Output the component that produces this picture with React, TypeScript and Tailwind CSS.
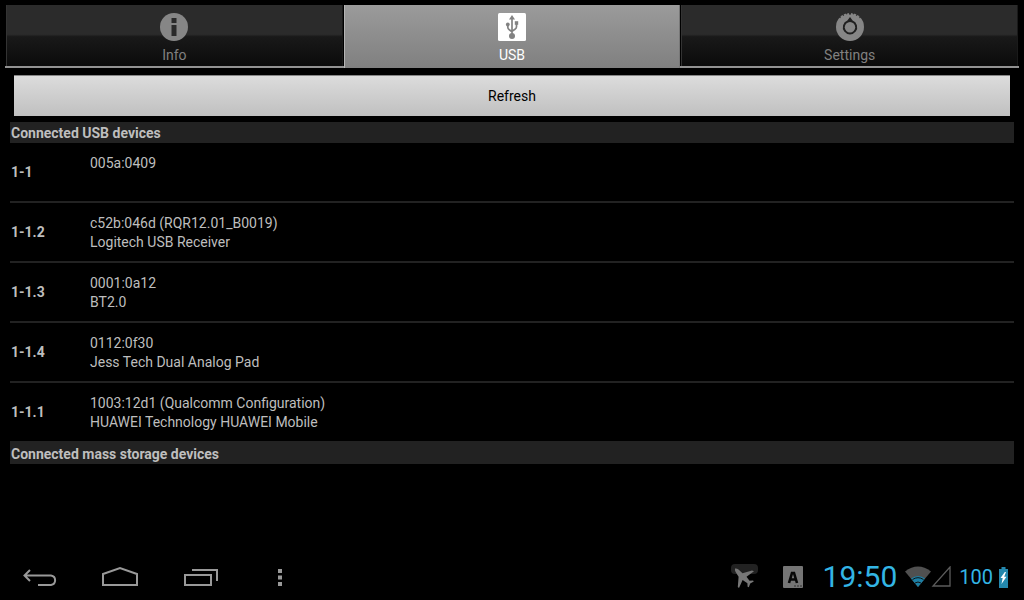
import { useState } from "react";
import type { ReactNode } from "react";

type Device = {
  port: string;
  id: string;
  name?: string;
};

const usbDevices: Device[] = [
  { port: "1-1", id: "005a:0409" },
  { port: "1-1.2", id: "c52b:046d (RQR12.01_B0019)", name: "Logitech USB Receiver" },
  { port: "1-1.3", id: "0001:0a12", name: "BT2.0" },
  { port: "1-1.4", id: "0112:0f30", name: "Jess Tech Dual Analog Pad" },
  { port: "1-1.1", id: "1003:12d1 (Qualcomm Configuration)", name: "HUAWEI Technology HUAWEI Mobile" },
];

function InfoIcon() {
  return (
    <svg width="28" height="28" viewBox="0 0 28 28" aria-hidden="true">
      <circle cx="14" cy="14" r="14" fill="#868686" />
      <path d="M11.5 5h5v5h-5zM11.5 12h5v11h-5z" fill="#2a2a2a" />
    </svg>
  );
}

function UsbIcon() {
  return (
    <svg width="28" height="28" viewBox="0 0 28 28" aria-hidden="true">
      <rect width="28" height="28" rx="1.5" fill="#fff" />
      <g fill="#828282">
        <path d="M14 2l3 4.500h-6z" />
        <circle cx="14" cy="23" r="3" />
        <circle cx="9.800" cy="11.500" r="1.900" />
        <path d="M16.800 8.200h3.400v3.600h-3.400z" />
      </g>
      <path
        d="M14 5v17M9.800 12v2.200q0 1.600 1.500 2.500l2.700 2M18.500 11v2.800q0 1.600-1.500 2.500l-3 2"
        fill="none"
        stroke="#828282"
        strokeWidth="1.700"
      />
    </svg>
  );
}

function SettingsIcon() {
  return (
    <svg width="28" height="28" viewBox="0 0 28 28" aria-hidden="true">
      <circle cx="14" cy="14" r="14" fill="#868686" />
      <path
        d="M3.500 4l1 .9M7 1.500l.7 1.100M10.500 0l.4 1.300M17.500 0l-.4 1.300M21 1.500l-.7 1.100M24.500 4l-1 .9"
        stroke="#2a2a2a"
        strokeWidth="1.200"
      />
      <path d="M12.800 0h2.400l-.6 1.800h-1.200z" fill="#2a2a2a" />
      <path d="M14 4l2.600 3.500a7.200 7.200 0 1 1-5.200 0z" fill="#202020" />
      <circle cx="14" cy="14.200" r="5.200" fill="#868686" />
    </svg>
  );
}

const tabs: { label: string; icon: ReactNode }[] = [
  { label: "Info", icon: <InfoIcon /> },
  { label: "USB", icon: <UsbIcon /> },
  { label: "Settings", icon: <SettingsIcon /> },
];

function TabBar({ active, onSelect }: { active: string; onSelect: (label: string) => void }) {
  return (
    <div role="tablist" className="mx-[5px] mt-[5px] flex gap-px border-b-2 border-[#929292] px-px">
      {tabs.map(({ label, icon }) => {
        const selected = label === active;
        return (
          <button
            key={label}
            type="button"
            role="tab"
            aria-selected={selected}
            onClick={() => onSelect(label)}
            className={
              selected
                ? "-mb-[2px] flex h-[63px] flex-1 flex-col items-center border-x border-l-[#b5b5b5] border-r-[#777] bg-linear-to-b from-[#9b9b9b] via-[#8d8d8d] to-[#808080] pt-2 text-white"
                : "flex h-[61px] flex-1 flex-col items-center border-x border-l-[#333] border-r-[#1a1a1a] bg-linear-to-b from-[#2b2b2b] from-48% via-[#191919] via-52% to-[#0b0b0b] pt-2 text-[#808080]"
            }
          >
            {icon}
            <span className="mt-1 text-sm leading-5">{label}</span>
          </button>
        );
      })}
    </div>
  );
}

function SectionTitle({ children }: { children: ReactNode }) {
  return <h2 className="bg-[#222] px-px pt-0.5 text-sm leading-[19px] font-bold text-[#bebebe]">{children}</h2>;
}

function DeviceRow({ port, id, name }: Device) {
  return (
    <li className="flex items-center py-[9px]">
      <span className="w-20 shrink-0 pl-px text-sm font-bold">{port}</span>
      <div className="min-h-10 pt-0.5 text-sm leading-[19px]">
        <p>{id}</p>
        {name && <p>{name}</p>}
      </div>
    </li>
  );
}

function NavButton({ label, children }: { label: string; children: ReactNode }) {
  return (
    <button type="button" aria-label={label} className="flex h-12 w-20 items-center justify-center">
      <svg width="40" height="24" viewBox="0 0 40 24" fill="none" stroke="#999" strokeWidth="2" aria-hidden="true">
        {children}
      </svg>
    </button>
  );
}

function StatusIcons() {
  return (
    <div className="flex items-center pt-0.5">
      <svg className="mr-6" width="28" height="26" viewBox="0 0 28 26" aria-hidden="true">
        <rect x="0" y="0" width="27" height="10" rx="4" fill="#222" />
        <path
          d="M4 4.500q2-.2 3.500 1l4 3.700L21 6.500l2 .8-7.500 5.500 3 4 3.500-.3.800 1-3.600 2-1.400 3.800-1.200-.6-.2-3.400-4.800-3.400L8 24l-1.200-1 .8-10.200L4.600 8Q3.600 6 4 4.500z"
          fill="#777"
        />
      </svg>
      <svg className="mr-5" width="20" height="22" viewBox="0 0 20 22" aria-hidden="true">
        <rect width="20" height="22" rx="1" fill="#757575" />
        <path d="M6 17l3-10h2l3 10M7.200 13.500h5.600" fill="none" stroke="#080808" strokeWidth="2.600" />
        <path d="M11 20h8" stroke="#333" strokeWidth="1" strokeDasharray="2 1" />
      </svg>
      <time className="text-3xl leading-9 text-[#33b5e5]">19:50</time>
      <svg className="ml-2" width="48" height="22" viewBox="0 0 48 22" aria-hidden="true">
        <path d="M13 21L0 5.500q13-10 26 0z" fill="#505050" />
        <path d="M13 21L6 12.500q7-5 14 0z" fill="#1b7fa5" />
        <path d="M7.500 13.500q5.500-3.600 11 0M10 17q3-2 6 0" fill="none" stroke="#111" strokeWidth="1" />
        <path d="M45 1v19H28z" fill="none" stroke="#5c5c5c" strokeWidth="1.300" />
      </svg>
      <span className="ml-1.5 text-xl leading-6 text-[#33b5e5]">100</span>
      <svg className="ml-1.5" width="9" height="21" viewBox="0 0 9 21" aria-hidden="true">
        <path d="M2.500 0h4v2H9v19H0V2h2.500z" fill="#2488ad" />
        <path d="M5.800 5L1.500 11h2.200L2.500 17 7.500 9.800H5.200L7 5z" fill="#fff" />
      </svg>
    </div>
  );
}

function SystemBar() {
  return (
    <footer className="flex h-12 items-center justify-between pr-4">
      <nav className="flex">
        <NavButton label="Back">
          <path d="M10 6l-5.500 5.500L10 17M4.500 11.500H31a4.800 4.800 0 0 1 0 9.500H18" />
        </NavButton>
        <NavButton label="Home">
          <path d="M3 21V10L20 4l17 6v11z" />
        </NavButton>
        <NavButton label="Recent apps">
          <path d="M5 11h26v10H5zM12 6h25v11" />
        </NavButton>
        <NavButton label="Menu">
          <path d="M18 5h4v4h-4zM18 11.500h4v4h-4zM18 18h4v4h-4z" fill="#999" stroke="none" />
        </NavButton>
      </nav>
      <StatusIcons />
    </footer>
  );
}

export default function App() {
  const [active, setActive] = useState("USB");

  return (
    <div className="flex min-h-screen flex-col bg-black font-[Roboto,'Noto_Sans',sans-serif] text-[#bebebe]">
      <TabBar active={active} onSelect={setActive} />

      <main className="flex-1 px-[10px] pt-[7px]">
        <div className="px-1 pb-1.5">
          <button
            type="button"
            className="block h-[41px] w-full border-t border-[#858585] bg-linear-to-b from-[#dcdcdc] to-[#c0c0c0] text-sm text-black"
          >
            Refresh
          </button>
        </div>

        <section>
          <SectionTitle>Connected USB devices</SectionTitle>
          <ul className="divide-y-2 divide-[#222]">
            {usbDevices.map((device) => (
              <DeviceRow key={device.port} {...device} />
            ))}
          </ul>
        </section>

        <section className="bg-[#222] pt-0.5">
          <SectionTitle>Connected mass storage devices</SectionTitle>
        </section>
      </main>

      <SystemBar />
    </div>
  );
}
